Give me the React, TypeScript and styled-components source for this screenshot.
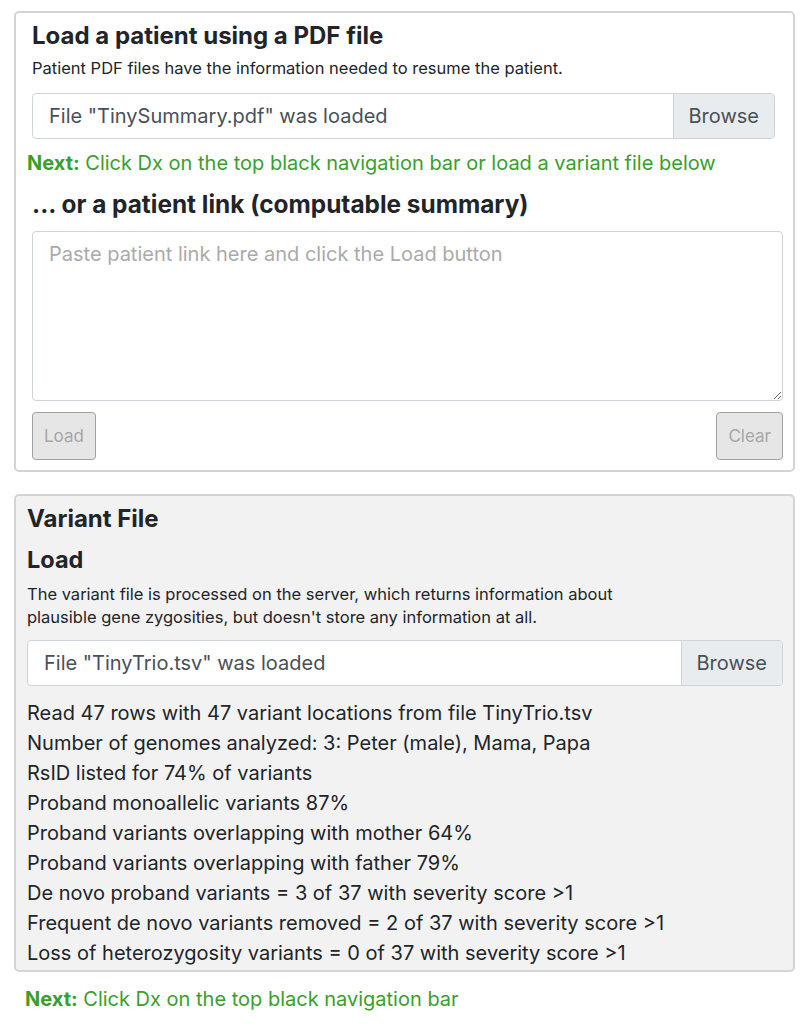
import React from 'react';
import styled, { createGlobalStyle } from 'styled-components';

const GlobalStyle = createGlobalStyle`
  body {
    margin: 0;
    background: #fff;
    font-family: Inter, 'Liberation Sans', Arial, sans-serif;
    color: #212529;
  }
`;

const Page = styled.div`
  width: 781px;
  padding: 11px 0 0 14px;
`;

const Card = styled.section<{ $muted?: boolean; $pad: string; $gap: number }>`
  border: 2px solid #d4d4d4;
  border-radius: 5px;
  background: ${(p) => (p.$muted ? '#f2f2f2' : '#fff')};
  padding: ${(p) => p.$pad};
  margin-bottom: ${(p) => p.$gap}px;
  display: flex;
  flex-direction: column;
`;

const Heading = styled.h4<{ $size?: number }>`
  margin: 0;
  font-size: ${(p) => p.$size || 24}px;
  line-height: 29px;
  font-weight: 700;
  color: #212529;
`;

const Small = styled.p`
  margin: 0;
  font-size: 16.5px;
  line-height: 23px;
  color: #212529;
`;

const FileGroup = styled.div<{ $right?: number }>`
  display: flex;
  height: 46px;
  box-sizing: border-box;
  margin-right: ${(p) => p.$right || 0}px;
  border: 1px solid #ced4da;
  border-radius: 4px;
  overflow: hidden;
  background: #fff;
  .label {
    flex: 1;
    display: flex;
    align-items: center;
    padding-left: 16px;
    font-size: 20px;
    color: #495057;
  }
  .browse {
    display: flex;
    align-items: center;
    padding: 0 15px;
    background: #e9ecef;
    border-left: 1px solid #ced4da;
    font-size: 20px;
    color: #495057;
  }
`;

const Next = styled.div<{ $indent?: number }>`
  font-size: 20px;
  line-height: 24px;
  color: #3a9e2e;
  margin-left: ${(p) => p.$indent || 0}px;
  b {
    font-weight: 700;
  }
`;

const TextArea = styled.textarea`
  height: 170px;
  box-sizing: border-box;
  border: 1px solid #ced4da;
  border-radius: 4px;
  padding: 10px 16px;
  font-family: Inter, 'Liberation Sans', Arial, sans-serif;
  font-size: 20px;
  resize: vertical;
  &::placeholder {
    color: #aaa;
  }
`;

const ButtonRow = styled.div`
  display: flex;
  justify-content: space-between;
`;

const GrayButton = styled.button`
  height: 48px;
  padding: 0 11px;
  background: #e6e6e6;
  border: 1.5px solid #a0a0a0;
  border-radius: 4px;
  font-family: Inter, 'Liberation Sans', Arial, sans-serif;
  font-size: 17px;
  color: #a6a6a6;
`;

const Stats = styled.div`
  display: flex;
  flex-direction: column;
  font-size: 20px;
  line-height: 30px;
  color: #212529;
`;

const Gap = styled.div<{ $h: number }>`
  height: ${(p) => p.$h}px;
  flex: none;
`;

const stats = [
  'Read 47 rows with 47 variant locations from file TinyTrio.tsv',
  'Number of genomes analyzed: 3: Peter (male), Mama, Papa',
  'RsID listed for 74% of variants',
  'Proband monoallelic variants 87%',
  'Proband variants overlapping with mother 64%',
  'Proband variants overlapping with father 79%',
  'De novo proband variants = 3 of 37 with severity score >1',
  'Frequent de novo variants removed = 2 of 37 with severity score >1',
  'Loss of heterozygosity variants = 0 of 37 with severity score >1',
];

export default function App() {
  return (
    <Page>
      <GlobalStyle />
      <Card $pad='8px 10px 10px 16px' $gap={22}>
        <Heading>Load a patient using a PDF file</Heading>
        <Gap $h={7} />
        <Small>Patient PDF files have the information needed to resume the patient.</Small>
        <Gap $h={13} />
        <FileGroup $right={8}>
          <div className='label'>File "TinySummary.pdf" was loaded</div>
          <div className='browse'>Browse</div>
        </FileGroup>
        <Gap $h={12} />
        <Next $indent={-5}>
          <b>Next:</b> Click Dx on the top black navigation bar or load a variant file below
        </Next>
        <Gap $h={15} />
        <Heading $size={24.4}>... or a patient link (computable summary)</Heading>
        <Gap $h={12} />
        <TextArea placeholder='Paste patient link here and click the Load button' />
        <Gap $h={11} />
        <ButtonRow>
          <GrayButton disabled>Load</GrayButton>
          <GrayButton disabled>Clear</GrayButton>
        </ButtonRow>
      </Card>
      <Card $muted $pad='8px 10px 2px 11px' $gap={15}>
        <Heading $size={24}>Variant File</Heading>
        <Gap $h={12} />
        <Heading $size={23.5}>Load</Heading>
        <Gap $h={9} />
        <Small>
          The variant file is processed on the server, which returns information about
          <br />
          plausible gene zygosities, but doesn't store any information at all.
        </Small>
        <Gap $h={11} />
        <FileGroup>
          <div className='label'>File "TinyTrio.tsv" was loaded</div>
          <div className='browse'>Browse</div>
        </FileGroup>
        <Gap $h={12} />
        <Stats>
          {stats.map((s, i) => (
            <div key={i}>{s}</div>
          ))}
        </Stats>
      </Card>
      <Next $indent={11}>
        <b>Next:</b> Click Dx on the top black navigation bar
      </Next>
    </Page>
  );
}
